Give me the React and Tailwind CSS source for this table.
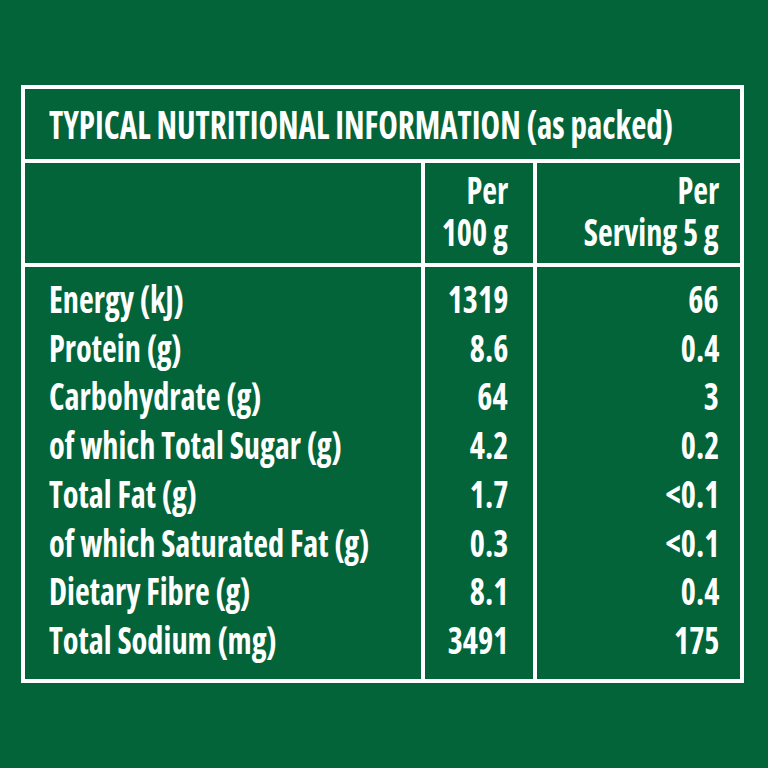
import React from "react";

const rows = [
  ["Energy (kJ)", "1319", "66"],
  ["Protein (g)", "8.6", "0.4"],
  ["Carbohydrate (g)", "64", "3"],
  ["of which Total Sugar (g)", "4.2", "0.2"],
  ["Total Fat (g)", "1.7", "<0.1"],
  ["of which Saturated Fat (g)", "0.3", "<0.1"],
  ["Dietary Fibre (g)", "8.1", "0.4"],
  ["Total Sodium (mg)", "3491", "175"],
];

const font = { fontFamily: "'Open Sans', 'Roboto', sans-serif", fontStretch: "75%" };

function Txt({ children, right }) {
  return (
    <span
      className={`inline-block whitespace-nowrap scale-x-85 ${right ? "origin-right" : "origin-left"}`}
    >
      {children}
    </span>
  );
}

export default function App() {
  return (
    <div className="h-[768px] w-[768px] overflow-hidden bg-[#03643a] pt-[85px] pl-[21px] text-white" style={font}>
      <div className="flex h-[598px] w-[723px] flex-col border-4 border-white font-bold">
        <div className="flex h-[74px] items-center border-b-4 border-white pl-[24px] text-[40px]">
          <span className="inline-block origin-left scale-x-[0.826] whitespace-nowrap">
            TYPICAL NUTRITIONAL INFORMATION (as packed)
          </span>
        </div>

        <div className="flex h-[104px] border-b-4 border-white text-[38px] leading-[42px]">
          <div className="w-[400px] border-r-4 border-white" />
          <div className="flex w-[112px] flex-col items-end border-r-4 border-white pt-[5px] pr-[25px]">
            <Txt right>Per</Txt>
            <Txt right>100 g</Txt>
          </div>
          <div className="flex flex-1 flex-col items-end pt-[5px] pr-[21px]">
            <Txt right>Per</Txt>
            <Txt right>Serving 5 g</Txt>
          </div>
        </div>

        <div className="flex flex-1 text-[38px] leading-[48.7px]">
          <div className="flex w-[400px] flex-col border-r-4 border-white pt-[7px] pl-[24px]">
            {rows.map((r) => (
              <Txt key={r[0]}>{r[0]}</Txt>
            ))}
          </div>
          <div className="flex w-[112px] flex-col items-end border-r-4 border-white pt-[7px] pr-[25px]">
            {rows.map((r) => (
              <Txt key={r[0]} right>{r[1]}</Txt>
            ))}
          </div>
          <div className="flex flex-1 flex-col items-end pt-[7px] pr-[21px]">
            {rows.map((r) => (
              <Txt key={r[0]} right>{r[2]}</Txt>
            ))}
          </div>
        </div>
      </div>
    </div>
  );
}
